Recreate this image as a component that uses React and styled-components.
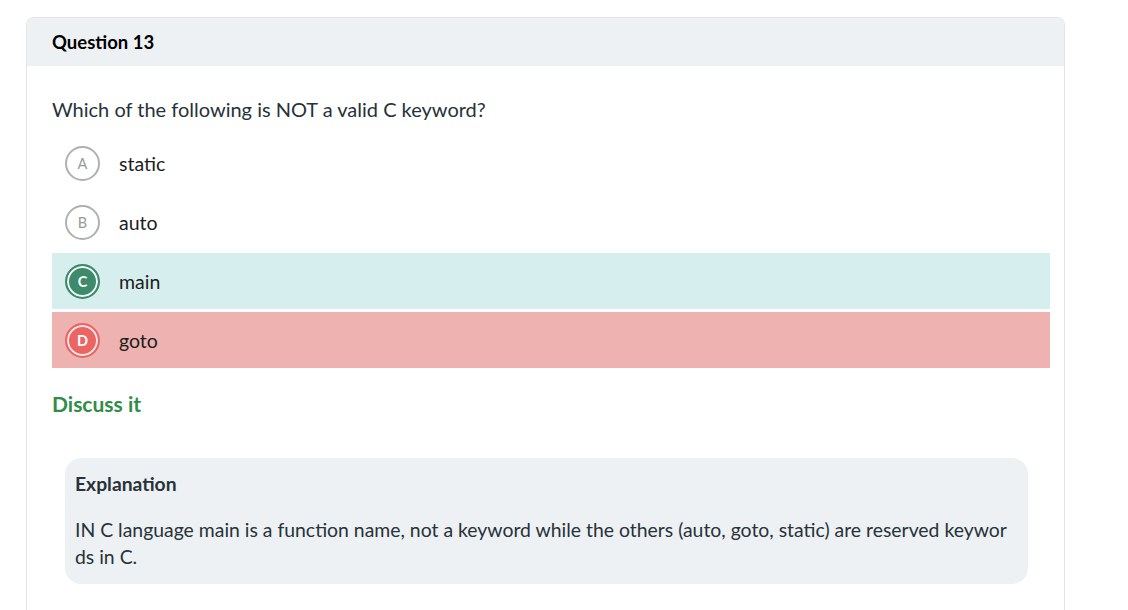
import React from "react";
import styled, { createGlobalStyle, css } from "styled-components";

const Global = createGlobalStyle`
  html, body { margin: 0; padding: 0; background: #ffffff; }
  body { font-family: "Lato", "Noto Sans", sans-serif; color: #273239; }
`;

const Page = styled.div`
  padding: 17px 0 0 26px;
  width: 1039px;
`;

const Card = styled.section`
  border: 1px solid #e2e4e7;
  border-bottom: none;
  border-radius: 8px 8px 0 0;
  overflow: hidden;
  min-height: 600px;
`;

const Header = styled.div`
  height: 48px;
  background: #eef1f4;
  display: flex;
  align-items: center;
  padding-left: 25px;
  padding-bottom: 1px;
  box-sizing: border-box;
  font-family: "Lato", sans-serif;
  font-weight: 700;
  font-size: 18.5px;
  color: #000;
`;

const Body = styled.div`
  padding: 29px 14px 0 25px;
`;

const QuestionText = styled.div`
  font-family: "Lato", sans-serif;
  font-size: 20px;
  line-height: 28px;
  color: #273239;
  margin-bottom: 12px;
`;

const Options = styled.div`
  display: flex;
  flex-direction: column;
  gap: 3px;
`;

const variants = {
  none: css`
    background: transparent;
  `,
  correct: css`
    background: #d6eeee;
  `,
  wrong: css`
    background: #eeb2b0;
  `,
};

const Row = styled.div`
  height: 56px;
  display: flex;
  align-items: center;
  padding-left: 13px;
  gap: 19px;
  ${(p) => variants[p.$state]}
`;

const circleVariants = {
  none: css`
    border: 2px solid #b0b0b0;
    color: #9a9a9a;
    background: #fff;
    font-weight: 400;
  `,
  correct: css`
    border: 2px solid #3d8b6a;
    color: #fff;
    background: #3d8b6a;
    box-shadow: inset 0 0 0 2px #f2fafa;
    font-weight: 700;
  `,
  wrong: css`
    border: 2px solid #ec6565;
    color: #fff;
    background: #ec6565;
    box-shadow: inset 0 0 0 2px #fbe9e9;
    font-weight: 700;
  `,
};

const Circle = styled.span`
  width: 31px;
  height: 31px;
  border-radius: 50%;
  display: inline-flex;
  align-items: center;
  justify-content: center;
  font-family: "Lato", sans-serif;
  font-size: 14.5px;
  flex: none;
  ${(p) => circleVariants[p.$state]}
`;

const OptionText = styled.span`
  font-family: "Lato", sans-serif;
  font-size: 19.5px;
  color: #1d1d1d;
`;

const Discuss = styled.a`
  display: block;
  margin-top: 24px;
  font-family: "Lato", sans-serif;
  font-weight: 700;
  font-size: 21px;
  line-height: 24px;
  color: #2f8d46;
  text-decoration: none;
`;

const Explanation = styled.div`
  margin: 42px 22px 0 13px;
  background: #eef1f4;
  border-radius: 16px;
  padding: 12px 14px 14px 10px;
`;

const ExplTitle = styled.div`
  font-family: "Lato", sans-serif;
  font-weight: 700;
  font-size: 19.3px;
  line-height: 27px;
  color: #273239;
  margin-bottom: 19px;
`;

const ExplText = styled.div`
  font-family: "Lato", sans-serif;
  font-size: 19.4px;
  line-height: 27px;
  color: #273239;
  word-break: break-all;
`;

const options = [
  { letter: "A", text: "static", state: "none" },
  { letter: "B", text: "auto", state: "none" },
  { letter: "C", text: "main", state: "correct" },
  { letter: "D", text: "goto", state: "wrong" },
];

export default function App() {
  return (
    <>
      <Global />
      <Page>
        <Card>
          <Header>Question 13</Header>
          <Body>
            <QuestionText>Which of the following is NOT a valid C keyword?</QuestionText>
            <Options>
              {options.map((o) => (
                <Row key={o.letter} $state={o.state}>
                  <Circle $state={o.state}>{o.letter}</Circle>
                  <OptionText>{o.text}</OptionText>
                </Row>
              ))}
            </Options>
            <Discuss href="#">Discuss it</Discuss>
            <Explanation>
              <ExplTitle>Explanation</ExplTitle>
              <ExplText>
                IN C language main is a function name, not a keyword while the others (auto, goto, static) are reserved keywords in C.
              </ExplText>
            </Explanation>
          </Body>
        </Card>
      </Page>
    </>
  );
}
